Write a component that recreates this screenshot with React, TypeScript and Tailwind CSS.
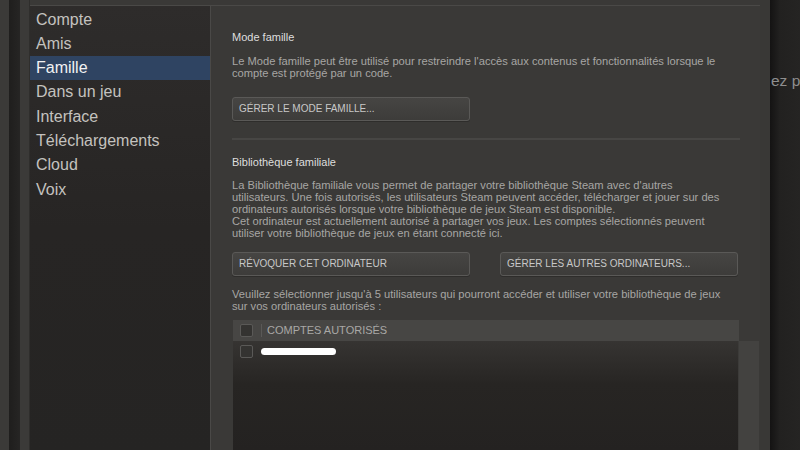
import React from "react";

const items = ["Compte", "Amis", "Famille", "Dans un jeu", "Interface", "Téléchargements", "Cloud", "Voix"];

function Btn({ label, className = "" }: { label: string; className?: string }) {
  return (
    <div
      className={
        "flex h-[24px] w-[238px] items-center rounded-[3px] border border-[#5a5957] bg-gradient-to-b from-[#464543] to-[#3d3c3a] pl-[6px] text-[10px] leading-[12px] text-[#c8c8c8] shadow-[0_1px_0_#2e2d2b] " +
        className
      }
    >
      {label}
    </div>
  );
}

function Check() {
  return <div className="h-[13px] w-[13px] rounded-[2px] border border-[#5a5957] bg-[#343331]" />;
}

export default function App() {
  return (
    <div className="flex h-[450px] w-[800px] overflow-hidden bg-[#3a3937] font-['Liberation_Sans',Arial,sans-serif]">
      <div className="w-[9px] bg-[#3b3a38]" />
      <div className="w-[11px] bg-gradient-to-r from-[#1f1e1d] to-[#262524]" />
      <div className="w-[10px] border-r border-[#2f2e2c] bg-[#3b3a38]" />
      <div className="flex w-[730px] flex-col pt-[5px]">
        <div className="flex flex-1 border-t border-[#4a4947]">
          {/* sidebar */}
          <div className="w-[181px] border-r border-[#4a4947] bg-gradient-to-b from-[#2e2c2b] via-[#272524] to-[#252423] pt-[1.5px]">
            {items.map((it) => (
              <div
                key={it}
                className={
                  "h-[24.3px] pl-[6px] text-[16px] leading-[24.3px] " +
                  (it === "Famille" ? "bg-[#2f4462] text-[#f2f2f2]" : "text-[#c4c2bf]")
                }
              >
                {it}
              </div>
            ))}
          </div>
          {/* main */}
          <div className="flex flex-1 flex-col pl-[21px]">
            <div className="mt-[25px] text-[11px] leading-[13px] text-[#dedede]">Mode famille</div>
            <div className="mt-[11px] text-[11.15px] leading-[12px] text-[#a7a6a4] whitespace-nowrap">
              Le Mode famille peut être utilisé pour restreindre l'accès aux contenus et fonctionnalités lorsque le
              <br />
              compte est protégé par un code.
            </div>
            <Btn label="GÉRER LE MODE FAMILLE..." className="mt-[18px]" />
            <div className="mt-[17px] h-[2px] w-[508px] bg-[#474644]" />
            <div className="mt-[16px] text-[11px] leading-[13px] text-[#dedede]">Bibliothèque familiale</div>
            <div className="mt-[10px] text-[11.15px] leading-[12.1px] text-[#a7a6a4] whitespace-nowrap">
              La Bibliothèque familiale vous permet de partager votre bibliothèque Steam avec d'autres
              <br />
              utilisateurs. Une fois autorisés, les utilisateurs Steam peuvent accéder, télécharger et jouer sur des
              <br />
              ordinateurs autorisés lorsque votre bibliothèque de jeux Steam est disponible.
              <br />
              Cet ordinateur est actuellement autorisé à partager vos jeux. Les comptes sélectionnés peuvent
              <br />
              utiliser votre bibliothèque de jeux en étant connecté ici.
            </div>
            <div className="mt-[13px] flex gap-[30px]">
              <Btn label="RÉVOQUER CET ORDINATEUR" />
              <Btn label="GÉRER LES AUTRES ORDINATEURS..." />
            </div>
            <div className="mt-[13px] text-[11.15px] leading-[11.5px] text-[#a7a6a4] whitespace-nowrap">
              Veuillez sélectionner jusqu'à 5 utilisateurs qui pourront accéder et utiliser votre bibliothèque de jeux
              <br />
              sur vos ordinateurs autorisés :
            </div>
            <div className="mt-[8px] ml-[1px] flex flex-1">
              <div className="flex w-[506px] flex-col">
                <div className="flex h-[21px] items-center bg-[#474644] pl-[7px]">
                  <Check />
                  <div className="ml-[8px] h-[13px] w-[1px] bg-[#5a5957]" />
                  <div className="ml-[5px] text-[11px] leading-[13px] text-[#a9a8a6]">COMPTES AUTORISÉS</div>
                </div>
                <div className="flex-1 border-r border-[#3c3b39] bg-gradient-to-b from-[#363432] via-[#272523] via-40% to-[#242221]">
                  <div className="flex items-center pl-[7px] pt-[4px]">
                    <Check />
                    <div className="ml-[8px] h-[7px] w-[75px] rounded-full bg-white blur-[0.6px]" />
                  </div>
                </div>
              </div>
              <div className="flex w-[20px] flex-col">
                <div className="h-[21px]" />
                <div className="flex-1 bg-[#434240]" />
              </div>
            </div>
          </div>
        </div>
      </div>
      <div className="w-[10px] bg-[#393836]" />
      <div className="flex-1 overflow-hidden bg-[linear-gradient(to_right,#141313,#222120_10px,#252423)] pl-[1px] pt-[73px]">
        <div className="whitespace-nowrap text-[15.5px] leading-[16px] text-[#8e8e8e]">ez p</div>
      </div>
    </div>
  );
}
